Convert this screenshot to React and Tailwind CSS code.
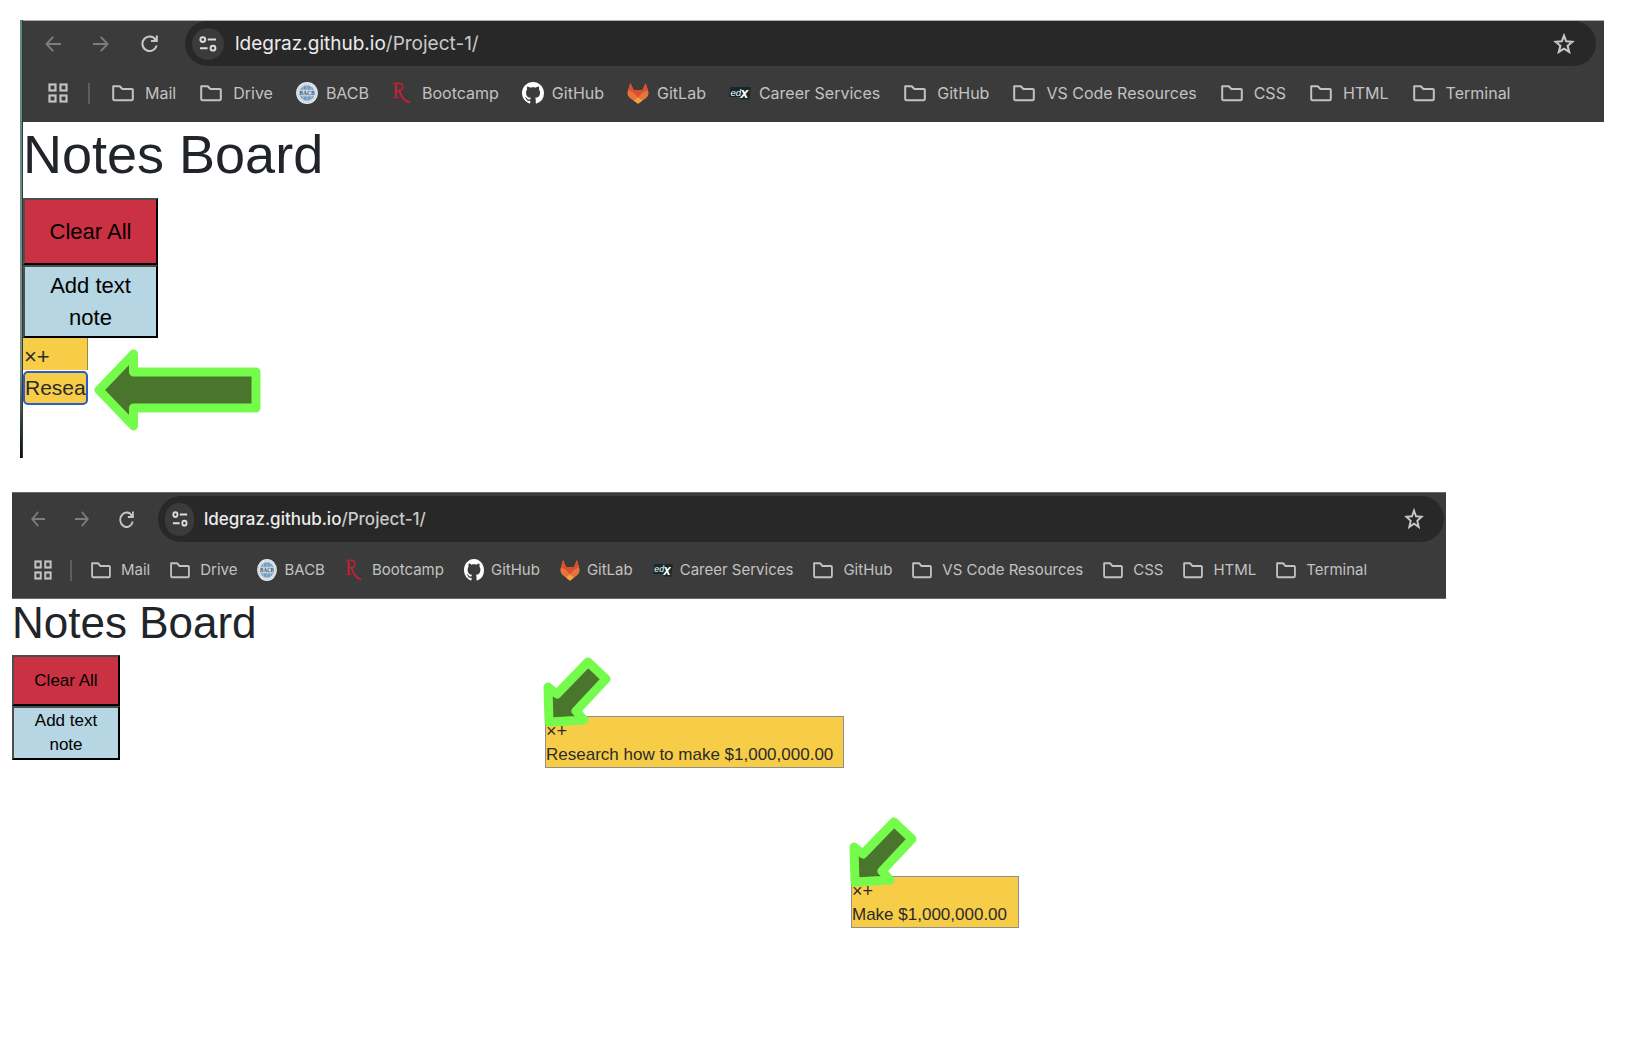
import React from "react";

const BARS = {
  large: {
    item: "h-[22px] w-[22px]",
    folderGap: "gap-[11px]",
    siteGap: "-ml-px gap-2",
  },
  small: {
    item: "h-[22px] w-5",
    folderGap: "gap-2.5",
    siteGap: "gap-[7px]",
  },
};

function BackIcon({ className }) {
  return (
    <svg viewBox="0 0 16 16" preserveAspectRatio="none" className={className} fill="none" stroke="currentColor" strokeWidth="1.9" aria-hidden="true">
      <path d="M8.2 0.8L1.4 8l6.800 7.200M1.400 8H16" />
    </svg>
  );
}

function ForwardIcon({ className }) {
  return (
    <svg viewBox="0 0 16 16" preserveAspectRatio="none" className={className} fill="none" stroke="currentColor" strokeWidth="1.9" aria-hidden="true">
      <path d="M7.800 0.8L14.600 8l-6.800 7.200M14.600 8H0" />
    </svg>
  );
}

function ReloadIcon({ className }) {
  return (
    <svg viewBox="0 0 17 17" preserveAspectRatio="none" className={className} fill="none" stroke="currentColor" strokeWidth="2" aria-hidden="true">
      <path d="M14.6 4.8A7.200 7.200 0 1 0 15.6 10.5M15.8 0.4V6H10" />
      <path d="M12 5.500h3.500V2.500z" fill="currentColor" stroke="none" />
    </svg>
  );
}

function TuneIcon({ className }) {
  return (
    <svg viewBox="0 0 18 16" preserveAspectRatio="none" className={className} fill="none" stroke="currentColor" strokeWidth="2" aria-hidden="true">
      <circle cx="3.8" cy="3.6" r="2.4" />
      <path d="M8.8 3.6H17M1 12.2h7.6" />
      <circle cx="14" cy="12.2" r="2.4" />
    </svg>
  );
}

function StarIcon({ className }) {
  return (
    <svg viewBox="0 0 20 20" preserveAspectRatio="none" className={className} fill="none" stroke="currentColor" strokeWidth="1.9" aria-hidden="true">
      <path d="M10 2.4l2 5.200 5.500.4-4.200 3.600 1.400 5.600L10 14.200l-4.700 3 1.400-5.600L2.500 8l5.500-.4z" />
    </svg>
  );
}

function GridIcon({ className }) {
  return (
    <svg viewBox="0 0 20 20" preserveAspectRatio="none" className={className} fill="none" stroke="currentColor" strokeWidth="2.200" aria-hidden="true">
      <rect x="1.5" y="1.5" width="6" height="6" />
      <rect x="12.5" y="1.5" width="6" height="6" />
      <rect x="1.5" y="12.5" width="6" height="6" />
      <rect x="12.5" y="12.5" width="6" height="6" />
    </svg>
  );
}

function FolderIcon({ className }) {
  return (
    <svg viewBox="0 0 22 22" preserveAspectRatio="none" className={className} fill="none" stroke="currentColor" strokeWidth="2" strokeLinejoin="round" aria-hidden="true">
      <path d="M1.2 4.3h6.6l2.6 2.7h9.4q1 0 1 1v9q0 1.2-1.2 1.2H2.4q-1.2 0-1.2-1.2z" />
    </svg>
  );
}

function BacbIcon({ className }) {
  return (
    <svg viewBox="0 0 22 22" preserveAspectRatio="none" className={className} aria-hidden="true">
      <circle cx="11" cy="11" r="10.9" fill="#e6ebef" />
      <circle cx="11" cy="11" r="9.2" fill="none" stroke="#a9bac7" strokeWidth="1" strokeDasharray="1.2 1" />
      <circle cx="11" cy="11" r="7.8" fill="#7299bb" />
      <path d="M4 8h14M4 14h14M11 3.5v15M7.5 4.5q-3 6.5 0 13M14.500 4.500q3 6.500 0 13" fill="none" stroke="#c3d5e3" strokeWidth="0.7" />
      <rect x="3" y="8.400" width="16" height="5.200" fill="#d4dfe8" />
      <text x="11" y="12.900" textAnchor="middle" fontSize="5.500" fontWeight="700" fontFamily="Liberation Serif, serif" fill="#2f5478">BACB</text>
    </svg>
  );
}

function RutgersIcon({ className }) {
  return (
    <svg viewBox="0 0 22 22" preserveAspectRatio="none" className={className} fill="none" stroke="#c6203a" aria-hidden="true">
      <path d="M1 1.200h6M1 15.600h6" strokeWidth="1" />
      <path d="M4 1.200v14.400" strokeWidth="2.200" />
      <path d="M6 1.200c6.500 0 6.500 7.400 0 7.400H4" strokeWidth="1.500" />
      <path d="M7 8.600c2 4.400 4 10.500 11 12" strokeWidth="1.900" />
    </svg>
  );
}

function GitHubIcon({ className }) {
  return (
    <svg viewBox="0 0 16 16" preserveAspectRatio="none" className={className} fill="#ffffff" aria-hidden="true">
      <path d="M8 0C3.58 0 0 3.58 0 8c0 3.54 2.290 6.530 5.470 7.590.4.070.550-.170.550-.380 0-.190-.010-.820-.010-1.490-2.010.370-2.530-.490-2.690-.940-.090-.230-.480-.940-.820-1.130-.280-.150-.680-.520-.010-.530.630-.010 1.080.580 1.230.820.720 1.210 1.870.870 2.330.660.070-.520.280-.870.510-1.070-1.780-.2-3.640-.890-3.640-3.950 0-.870.310-1.590.820-2.150-.080-.2-.360-1.020.080-2.120 0 0 .670-.210 2.200.820.640-.180 1.320-.270 2-.270s1.360.090 2 .270c1.530-1.040 2.200-.820 2.200-.820.440 1.100.160 1.920.080 2.120.510.560.820 1.270.820 2.150 0 3.070-1.870 3.750-3.650 3.950.290.250.540.730.540 1.480 0 1.070-.010 1.930-.010 2.200 0 .210.150.460.550.380A8.010 8.010 0 0 0 16 8c0-4.420-3.580-8-8-8z" />
    </svg>
  );
}

function GitLabIcon({ className }) {
  return (
    <svg viewBox="0 0 22 22" preserveAspectRatio="none" className={className} aria-hidden="true">
      <path d="M3.400 1L1 8.500Q-.8 13.500 3.200 16.200L11 21.800l7.800-5.600Q22.800 13.500 21 8.500L18.600 1l-3.200 7H6.600z" fill="#e8743b" />
      <path d="M3.400 1L1 8.500Q6 9 11 15.600 16 9 21 8.500L18.600 1l-3.200 7H6.600z" fill="#d9502f" />
      <path d="M11 15.200L6.800 18.800l4.200 3 4.200-3z" fill="#f0a33f" />
    </svg>
  );
}

function EdxIcon({ className }) {
  return (
    <svg viewBox="0 0 22 22" preserveAspectRatio="none" className={className} aria-hidden="true">
      <path d="M1.500 5h20.500l-2 12.500h-8.500v-2.500H0z" fill="#15292d" />
      <text x="1.500" y="13.500" fontSize="9.500" fontStyle="italic" fontFamily="Liberation Sans, sans-serif" fill="#ffffff">ed</text>
      <text x="11.500" y="16" fontSize="14" fontWeight="700" fontStyle="italic" fontFamily="Liberation Sans, sans-serif" fill="#ffffff">x</text>
    </svg>
  );
}

const BOOKMARKS = [
  { label: "Mail", Icon: FolderIcon, folder: true },
  { label: "Drive", Icon: FolderIcon, folder: true },
  { label: "BACB", Icon: BacbIcon },
  { label: "Bootcamp", Icon: RutgersIcon },
  { label: "GitHub", Icon: GitHubIcon },
  { label: "GitLab", Icon: GitLabIcon },
  { label: "Career Services", Icon: EdxIcon },
  { label: "GitHub", Icon: FolderIcon, folder: true },
  { label: "VS Code Resources", Icon: FolderIcon, folder: true },
  { label: "CSS", Icon: FolderIcon, folder: true },
  { label: "HTML", Icon: FolderIcon, folder: true },
  { label: "Terminal", Icon: FolderIcon, folder: true },
];

function Bookmarks({ size }) {
  const bar = BARS[size];
  return BOOKMARKS.map(({ label, Icon, folder }, i) => (
    <a
      key={i}
      href="#"
      className={`flex shrink-0 items-center whitespace-nowrap ${folder ? bar.folderGap : bar.siteGap}`}
    >
      <Icon className={`shrink-0 ${bar.item}`} />
      {label}
    </a>
  ));
}

function Address() {
  return (
    <span className="flex-1 whitespace-nowrap text-[#c9c9c9]">
      <span className="text-[#ececec]">ldegraz.github.io</span>/Project-1/
    </span>
  );
}

function Arrow({ className, viewBox, d }) {
  return (
    <svg viewBox={viewBox} className={className} aria-hidden="true">
      <path d={d} fill="#49752c" stroke="#75fb4c" strokeWidth="9" strokeLinejoin="round" />
    </svg>
  );
}

function Note({ className, text }) {
  return (
    <div className={`absolute h-[52px] border border-[#8f8f8f] bg-[#f7cd47] text-[17px] leading-[25px] whitespace-nowrap text-[#2b2b2b] ${className}`}>
      <div className="flex h-[25px] items-end text-[18px] leading-[22px]">
        <button type="button" aria-label="Delete note">×</button>
        <button type="button" aria-label="Add line">+</button>
      </div>
      <p>{text}</p>
      <Arrow
        className="absolute -top-[62px] -left-[4px] h-[72px] w-[72px]"
        viewBox="0 0 72 72"
        d="M46 7L64 24L34 56L42 65L7 67L6 32L15 39Z"
      />
    </div>
  );
}

const BUTTON = "block border-2 border-t-[#4d4d4d] border-l-[#4d4d4d] border-r-black border-b-black text-center text-black";

export default function App() {
  return (
    <main className="min-h-screen bg-white font-['Liberation_Sans',Arial,sans-serif]">
      <section className="mr-7 ml-5 flex h-[458px] pt-5">
        <div className="w-0.5 shrink-0 bg-linear-to-b from-[#5d8a80] from-0% via-[#76918b] via-80% to-[#06110f]" />
        <div className="w-px shrink-0 bg-[#2f3a38]" />
        <div className="min-w-0 flex-1">
          <header className="h-[102px] border-t border-[#a9b0ae] bg-[#3b3b3b] font-[Inter,sans-serif]">
            <nav className="flex h-[45px] items-center pr-2 pl-[22px]" aria-label="Navigation">
              <button type="button" aria-label="Back" className="mr-8 text-[#7d7d7d]"><BackIcon className="h-4 w-4" /></button>
              <button type="button" aria-label="Forward" className="mr-8 text-[#7d7d7d]"><ForwardIcon className="h-4 w-4" /></button>
              <button type="button" aria-label="Reload" className="mr-[27px] text-[#c7c7c7]"><ReloadIcon className="h-[17px] w-[17px]" /></button>
              <div className="flex h-full flex-1 items-center rounded-full bg-[#282828] pr-[21px] pl-[7px] text-[19px] leading-8">
                <button type="button" aria-label="Site information" className="mr-[11px] flex h-8 w-8 items-center justify-center rounded-full bg-[#3b3b3b] text-[#dcdcdc]">
                  <TuneIcon className="h-4 w-[18px]" />
                </button>
                <Address />
                <button type="button" aria-label="Bookmark this page" className="text-[#c7c7c7]"><StarIcon className="h-[22px] w-[22px]" /></button>
              </div>
            </nav>
            <nav className="flex h-[54px] items-center gap-6 pl-[25px] text-[16px] text-[#c2c2c2]" aria-label="Bookmarks">
              <button type="button" aria-label="Apps" className="-mr-1 shrink-0"><GridIcon className="h-5 w-5" /></button>
              <span className="-mr-0.5 h-[21px] w-0.5 shrink-0 bg-[#5e5e5e]" />
              <Bookmarks size="large" />
            </nav>
          </header>
          <div className="text-[22px] leading-8">
            <h1 className="h-[76px] text-[54px] leading-[64px] text-[#212529]">Notes Board</h1>
            <button type="button" className={`${BUTTON} h-[67px] w-[135px] bg-[#ca3142]`}>Clear All</button>
            <button type="button" className={`${BUTTON} h-[73px] w-[135px] bg-[#b5d6e2] px-4`}>Add text note</button>
            <div className="flex items-start gap-[6px]">
              <div className="w-[65px] text-[21px] text-[#2b2b2b]">
                <div className="flex h-8 items-end border-r border-[#9a8a4a] bg-[#f7cd47] pl-px text-[22px] leading-[26px]">
                  <button type="button" aria-label="Delete note">×</button>
                  <button type="button" aria-label="Add line">+</button>
                </div>
                <input
                  aria-label="Note text"
                  defaultValue="Resea"
                  className="mt-px block h-[34px] w-full rounded-[5px] border-2 border-[#2b5bc9] bg-[#f7cd47] outline-none"
                />
              </div>
              <Arrow
                className="mt-[11px] h-[82px] w-[168px]"
                viewBox="0 0 168 82"
                d="M5 41L39.500 5V23H162V59H39.500V77Z"
              />
            </div>
          </div>
        </div>
      </section>

      <section className="relative mt-[34px] ml-3">
        <header className="mr-[186px] h-[107px] border-y border-[#6b6b6b] bg-[#3b3b3b] pt-[3px] font-[Inter,sans-serif]">
          <nav className="flex h-[46px] items-center pr-0.5 pl-[19px]" aria-label="Navigation">
            <button type="button" aria-label="Back" className="mr-[30px] text-[#7d7d7d]"><BackIcon className="h-4 w-[14px]" /></button>
            <button type="button" aria-label="Forward" className="mr-[30px] text-[#7d7d7d]"><ForwardIcon className="h-4 w-[14px]" /></button>
            <button type="button" aria-label="Reload" className="mr-6 text-[#c7c7c7]"><ReloadIcon className="h-[17px] w-[15px]" /></button>
            <div className="flex h-full flex-1 items-center rounded-full bg-[#282828] pr-5 pl-[7px] text-[17px] leading-8 font-medium">
              <button type="button" aria-label="Site information" className="mr-[10px] flex h-[33px] w-[29px] items-center justify-center rounded-full bg-[#3b3b3b] text-[#dcdcdc]">
                <TuneIcon className="h-4 w-4" />
              </button>
              <Address />
              <button type="button" aria-label="Bookmark this page" className="text-[#c7c7c7]"><StarIcon className="h-[22px] w-5" /></button>
            </div>
          </nav>
          <nav className="flex h-14 items-center gap-5 pl-[22px] text-[15px] text-[#c2c2c2]" aria-label="Bookmarks">
            <button type="button" aria-label="Apps" className="-mr-0.5 shrink-0"><GridIcon className="h-5 w-[18px]" /></button>
            <span className="-mr-px h-[21px] w-0.5 shrink-0 bg-[#5e5e5e]" />
            <Bookmarks size="small" />
          </nav>
        </header>
        <div className="text-[17px] leading-6">
          <h1 className="h-14 text-[44px] leading-[48px] text-[#212529]">Notes Board</h1>
          <button type="button" className={`${BUTTON} h-[51px] w-[108px] bg-[#ca3142]`}>Clear All</button>
          <button type="button" className={`${BUTTON} h-[54px] w-[108px] bg-[#b5d6e2] px-4`}>Add text note</button>
        </div>
        <Note className="top-[224px] left-[533px] w-[299px]" text="Research how to make $1,000,000.00" />
        <Note className="top-[384px] left-[839px] w-[168px]" text="Make $1,000,000.00" />
      </section>
    </main>
  );
}
